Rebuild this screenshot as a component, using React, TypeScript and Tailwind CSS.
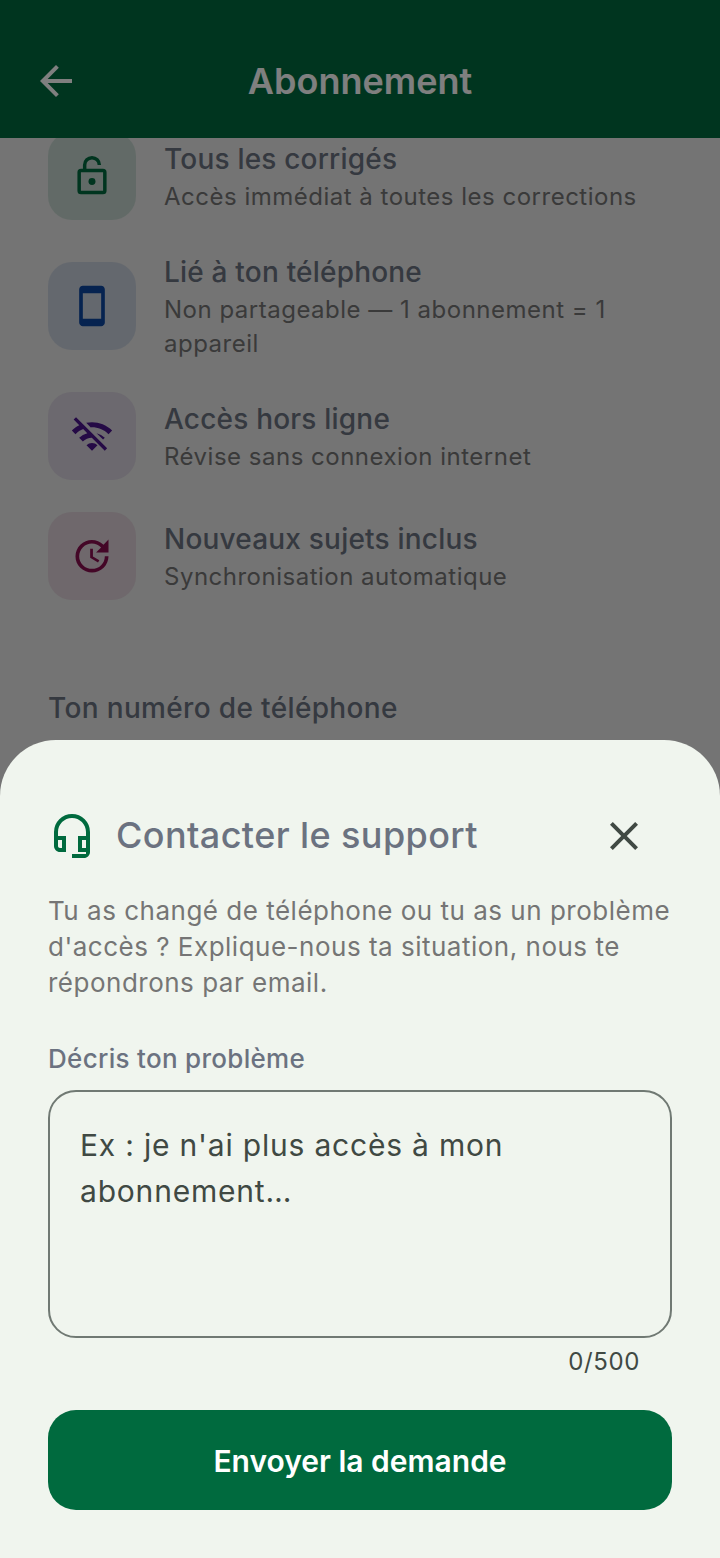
import { MdArrowBack, MdClose, MdOutlineHeadsetMic, MdSmartphone, MdUpdate, MdWifiOff } from "react-icons/md"
import type { ComponentType } from "react"

type Feature = {
  icon: ComponentType<{ className?: string }>
  box: string
  color: string
  title: string
  text: string
}

// open padlock with the shackle hinged on the left
function LockOpenRight({ className }: { className?: string }) {
  return (
    <svg viewBox="0 0 24 24" fill="none" stroke="currentColor" strokeWidth="1.9" className={className}>
      <rect x="5" y="9" width="14" height="12" rx="1" />
      <path d="M8 9V6a4 4 0 0 1 8 0" />
      <circle cx="12" cy="15" r="1.9" fill="currentColor" stroke="none" />
    </svg>
  )
}

const features: Feature[] = [
  { icon: LockOpenRight, box: "bg-[#00693e]/15", color: "text-[#006a3e]", title: "Tous les corrigés", text: "Accès immédiat à toutes les corrections" },
  { icon: MdSmartphone, box: "bg-[#1a4fa0]/15", color: "text-[#0d47a1]", title: "Lié à ton téléphone", text: "Non partageable — 1 abonnement = 1 appareil" },
  { icon: MdWifiOff, box: "bg-[#4a148c]/10", color: "text-[#4a148c]", title: "Accès hors ligne", text: "Révise sans connexion internet" },
  { icon: MdUpdate, box: "bg-[#880e4f]/10", color: "text-[#880e4f]", title: "Nouveaux sujets inclus", text: "Synchronisation automatique" },
]

export default function App() {
  return (
    <div className="relative h-[1558px] w-[720px] overflow-hidden bg-[#e8e8e8] font-['Inter',sans-serif] antialiased">
      {/* Page behind the sheet */}
      <header className="relative z-10 flex h-[138px] items-start bg-[#006a3e] px-8 pt-[57px] text-white">
        <MdArrowBack className="size-12" />
        <h1 className="flex-1 pr-12 text-center text-4xl leading-[48px] font-semibold">Abonnement</h1>
      </header>

      <main className="-mt-1.5 px-12">
        <div className="flex flex-col gap-8">
          {features.map((f) => (
            <div key={f.title} className="flex items-center gap-7">
              <div className={`flex size-[88px] shrink-0 items-center justify-center rounded-3xl ${f.box}`}>
                <f.icon className={`size-11 ${f.color}`} />
              </div>
              <div>
                <p className="text-[28px] leading-10 font-medium tracking-[0.2px] text-[#6b7280]">{f.title}</p>
                <p className="translate-y-px text-2xl leading-[34px] tracking-[0.5px] text-[#757575]">{f.text}</p>
              </div>
            </div>
          ))}
        </div>
        <p className="mt-[89px] text-[28px] leading-[38px] font-medium tracking-[0.35px] text-[#6b7280]">Ton numéro de téléphone</p>
      </main>

      {/* Scrim */}
      <div className="absolute inset-0 z-20 bg-black/50" />

      {/* Bottom sheet */}
      <section className="absolute inset-x-0 bottom-0 z-30 flex h-[818px] flex-col rounded-t-[56px] bg-[#f0f5ee] px-12 pt-[66px]">
        <div className="flex h-[60px] items-center">
          <MdOutlineHeadsetMic className="size-12 text-[#006a3e]" />
          <h2 className="ml-5 flex-1 -translate-y-px text-4xl leading-[48px] font-medium tracking-[0.4px] text-[#6b7280]">Contacter le support</h2>
          <MdClose className="mr-6 size-12 text-[#404943]" />
        </div>
        <p className="mt-[27px] text-[26px] leading-9 tracking-[0.5px] text-[#757575]">
          Tu as changé de téléphone ou tu as un problème d'accès ? Explique-nous ta situation, nous te répondrons par email.
        </p>
        <label className="mt-[40px] text-[26px] leading-9 font-medium tracking-[0.3px] text-[#6b7280]">Décris ton problème</label>
        <textarea
          readOnly
          placeholder="Ex : je n'ai plus accès à mon abonnement…"
          className="mt-[13px] h-[248px] w-full resize-none rounded-[28px] border-2 border-[#707973] px-[30px] py-[30px] text-[30px] leading-[46px] tracking-[0.8px] outline-none placeholder:text-[#404943]"
        />
        <p className="mt-2 pr-8 text-right text-2xl leading-8 tracking-[0.6px] text-[#404943]">0/500</p>
        <button className="mt-[32px] h-[100px] w-full rounded-[28px] bg-[#006a3e] pt-0.5 text-[30px] font-semibold text-white">
          Envoyer la demande
        </button>
      </section>
    </div>
  )
}
